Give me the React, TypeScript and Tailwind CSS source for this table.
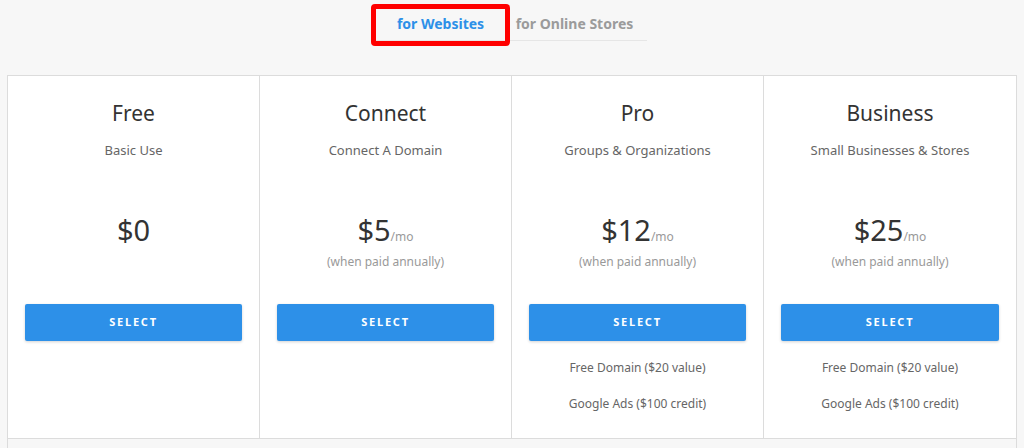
import React from 'react';

interface Plan {
  name: string;
  tagline: string;
  price: string;
  monthly: boolean;
  features: string[];
}

const plans: Plan[] = [
  { name: 'Free', tagline: 'Basic Use', price: '$0', monthly: false, features: [] },
  { name: 'Connect', tagline: 'Connect A Domain', price: '$5', monthly: true, features: [] },
  {
    name: 'Pro',
    tagline: 'Groups & Organizations',
    price: '$12',
    monthly: true,
    features: ['Free Domain ($20 value)', 'Google Ads ($100 credit)'],
  },
  {
    name: 'Business',
    tagline: 'Small Businesses & Stores',
    price: '$25',
    monthly: true,
    features: ['Free Domain ($20 value)', 'Google Ads ($100 credit)'],
  },
];

function PlanColumn({ plan, last }: { plan: Plan; last: boolean }) {
  return (
    <div className={`flex flex-col items-center px-[17px] pt-[23px] ${last ? '' : 'border-r border-[#dcdcdc]'}`}>
      {/* Title */}
      <h2 className="text-[21px] leading-[28px] text-[#333]">{plan.name}</h2>
      <p className="mt-[14px] text-[13px] leading-[18px] text-[#666]">{plan.tagline}</p>

      {/* Price */}
      <div className="mt-[53px] h-[58px] flex flex-col items-center">
        <div className="flex items-baseline h-[36px]">
          <span className="text-[29px] leading-[36px] text-[#333]">{plan.price}</span>
          {plan.monthly && <span className="text-[12px] text-[#999]">/mo</span>}
        </div>
        {plan.monthly && (
          <p className="mt-[6px] text-[12px] leading-[16px] text-[#999]">(when paid annually)</p>
        )}
      </div>

      {/* CTA */}
      <button className="mt-[34px] w-full h-[37px] flex items-center justify-center rounded-[2px] bg-[#2d90e8] shadow-[0_1px_3px_rgba(0,0,0,0.18)]">
        <span className="text-white text-[11px] leading-[14px] font-bold tracking-[1.8px] -mt-[1px]">SELECT</span>
      </button>

      {/* Features */}
      <div className="mt-[19px] flex flex-col items-center gap-[20px]">
        {plan.features.map((f) => (
          <p key={f} className="text-[12px] leading-[16px] text-[#666]">
            {f}
          </p>
        ))}
      </div>
    </div>
  );
}

export default function App() {
  return (
    <div
      className="w-[1024px] h-[448px] overflow-hidden bg-[#f7f7f7]"
      style={{ fontFamily: '"Noto Sans", "Liberation Sans", sans-serif' }}
    >
      {/* Tabs */}
      <div className="flex justify-center">
        <div className="relative flex border-b border-[#e6e6e6] ml-[-6px]">
          <div className="w-[139px] pt-[14px] pb-[6px] text-center text-[14px] leading-[20px] font-bold text-[#2d90e8]">
            for Websites
          </div>
          <div className="w-[137px] pt-[14px] pb-[6px] pr-[8px] text-center text-[14px] leading-[20px] font-bold text-[#9b9b9b]">
            for Online Stores
          </div>
          {/* highlight annotation */}
          <div className="absolute left-0 top-[4px] w-[139px] h-[42px] border-[5px] border-[#ff0000] rounded-[4px]" />
        </div>
      </div>

      {/* Plans table */}
      <div className="mx-[7px] mt-[34px] grid grid-cols-4 h-[364px] overflow-hidden bg-white border border-[#dcdcdc]">
        {plans.map((p, i) => (
          <PlanColumn key={p.name} plan={p} last={i === plans.length - 1} />
        ))}
      </div>
      <div className="mx-[7px] h-[20px] border-x border-[#dcdcdc]" />
    </div>
  );
}
